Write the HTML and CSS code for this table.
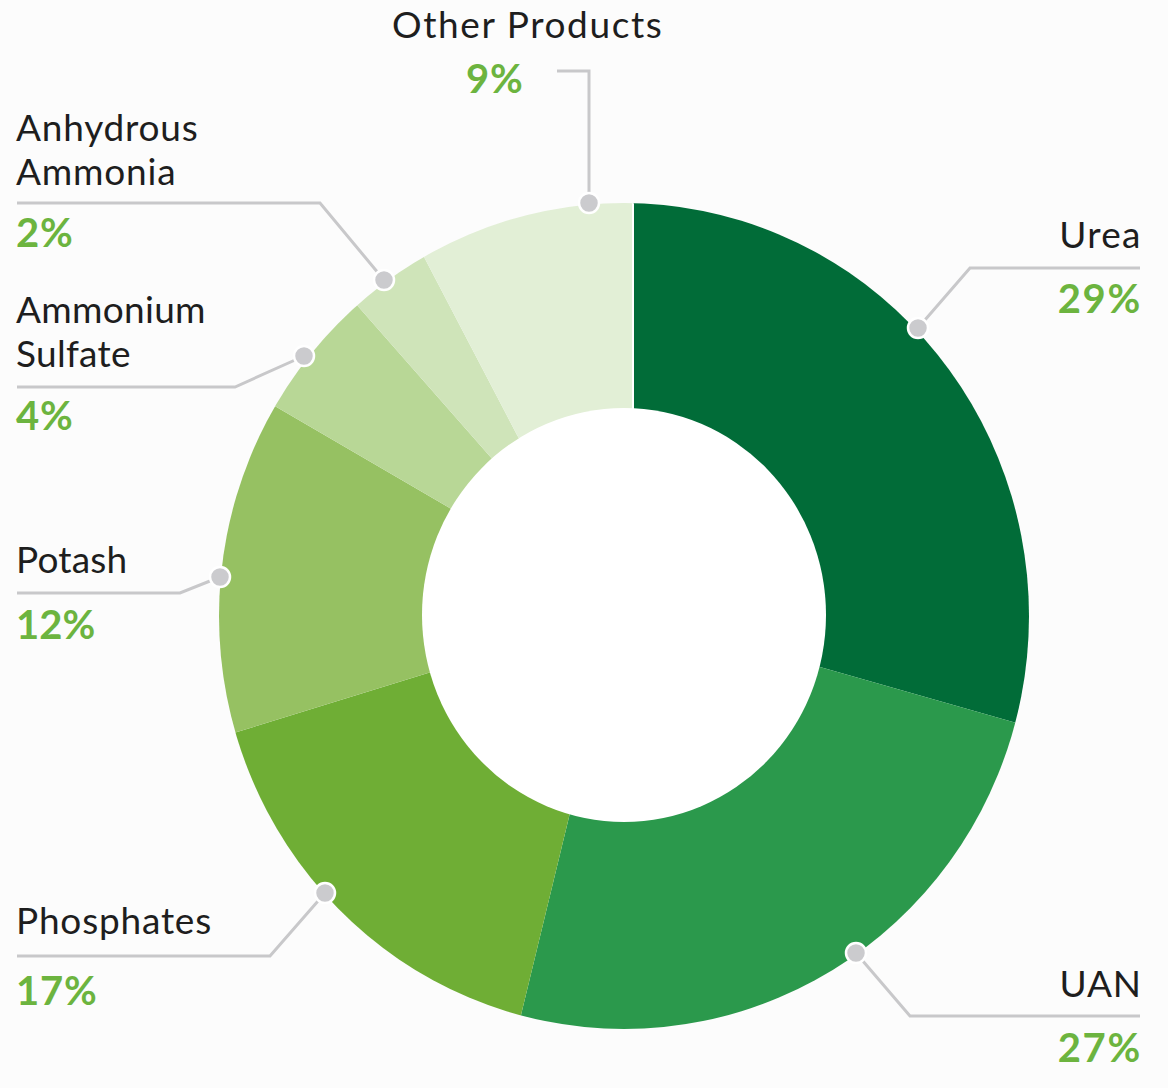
FILE: index.html
```html
<!DOCTYPE html>
<html lang="en">
<head>
<meta charset="utf-8">
<title>Product Mix</title>
<link rel="stylesheet" href="styles.css">
</head>
<body>
<div class="chart">
  <svg class="donut" width="1168" height="1088" viewBox="0 0 1168 1088" xmlns="http://www.w3.org/2000/svg">
    <defs>
      <clipPath id="ring">
        <ellipse cx="624" cy="616" rx="405" ry="413"/>
      </clipPath>
    </defs>
    <g clip-path="url(#ring)">
      <polygon class="seg seg-urea" points="633,407 633,202 633,0 1168,0 1167,766 1013,722 820,667 624,615"/>
      <polygon class="seg seg-uan" points="820,667 1013,722 1167,766 1168,1088 503,1088 521,1015 569,817 624,615"/>
      <polygon class="seg seg-phos" points="569,817 521,1015 503,1088 0,1088 0,805 237,732 428,673 624,615"/>
      <polygon class="seg seg-potash" points="428,673 237,732 0,805 0,246 273,405 448,507 624,615"/>
      <polygon class="seg seg-amsul" points="448,507 273,405 0,246 218,147 356,304 494,461 624,615"/>
      <polygon class="seg seg-anh" points="494,461 356,304 218,147 329,75 423,255 517,435 624,615"/>
      <polygon class="seg seg-other" points="517,435 423,255 329,75 633,0 633,202 633,407 624,615"/>
      <line class="sep" x1="633" y1="190" x2="633" y2="410"/>
    </g>
    <ellipse class="hole" cx="624" cy="615" rx="202" ry="207"/>

    <g class="leaders">
      <polyline points="557,71 589,71 589,203"/>
      <polyline points="918,328 970,268 1140,268"/>
      <polyline points="856,953 910,1016 1140,1016"/>
      <polyline points="325,893 270,956 17,956"/>
      <polyline points="220,577 180,593 17,593"/>
      <polyline points="304,356 235,387 17,387"/>
      <polyline points="384,280 320,203 17,203"/>
    </g>
    <g class="dots">
      <circle cx="589" cy="203" r="10"/>
      <circle cx="918" cy="328" r="10"/>
      <circle cx="856" cy="953" r="10"/>
      <circle cx="325" cy="893" r="10"/>
      <circle cx="220" cy="577" r="10"/>
      <circle cx="304" cy="356" r="10"/>
      <circle cx="384" cy="280" r="10"/>
    </g>
  </svg>

  <div class="label l-other">
    <div class="name">Other Products</div>
    <div class="pct">9%</div>
  </div>
  <div class="label l-anh">
    <div class="name">Anhydrous<br>Ammonia</div>
    <div class="pct">2%</div>
  </div>
  <div class="label l-amsul">
    <div class="name">Ammonium<br>Sulfate</div>
    <div class="pct">4%</div>
  </div>
  <div class="label l-potash">
    <div class="name">Potash</div>
    <div class="pct">12%</div>
  </div>
  <div class="label l-phos">
    <div class="name">Phosphates</div>
    <div class="pct">17%</div>
  </div>
  <div class="label right l-urea">
    <div class="name">Urea</div>
    <div class="pct">29%</div>
  </div>
  <div class="label right l-uan">
    <div class="name">UAN</div>
    <div class="pct">27%</div>
  </div>
</div>
</body>
</html>
```

FILE: styles.css
```css
* { box-sizing: border-box; }

html, body {
  margin: 0;
  padding: 0;
  background: #fcfcfc;
}

body {
  font-family: "Lato", "Liberation Sans", sans-serif;
  color: #1e1e1e;
}

.chart {
  position: relative;
  width: 1168px;
  height: 1088px;
  overflow: hidden;
}

.donut {
  position: absolute;
  left: 0;
  top: 0;
  display: block;
}

.seg-urea   { fill: #016c38; }
.seg-uan    { fill: #2b994c; }
.seg-phos   { fill: #6fae35; }
.seg-potash { fill: #96c162; }
.seg-amsul  { fill: #b8d796; }
.seg-anh    { fill: #cfe4b9; }
.seg-other  { fill: #e2efd6; }

.sep {
  stroke: #ffffff;
  stroke-width: 2;
}

.hole { fill: #ffffff; }

.leaders polyline {
  fill: none;
  stroke: #c8c8ca;
  stroke-width: 3;
  stroke-linejoin: miter;
}

.dots circle {
  fill: #cbcbce;
  stroke: #ffffff;
  stroke-width: 2.5;
}

.label {
  position: absolute;
  white-space: nowrap;
}

.label.right { text-align: right; }

.name {
  font-size: 37px;
  line-height: 44px;
  font-weight: 400;
  letter-spacing: 0.8px;
  color: #1e1e1e;
}

.pct {
  font-size: 40px;
  line-height: 40px;
  font-weight: 700;
  letter-spacing: 0.8px;
  color: #6cb43f;
}

.label.right .name,
.label.right .pct { margin-right: -0.8px; }

.l-other { left: 392px; top: 2px; }
.l-other .name { letter-spacing: 1.6px; }
.l-other .pct { margin-top: 12px; padding-left: 74px; }

.l-anh { left: 16px; top: 105px; }
.l-anh .pct { margin-top: 19px; }

.l-amsul { left: 16px; top: 287px; }
.l-amsul .name { letter-spacing: 0.3px; }
.l-amsul .pct { margin-top: 20px; }

.l-potash { left: 16px; top: 537px; }
.l-potash .name { letter-spacing: 0.2px; }
.l-potash .pct { margin-top: 23px; letter-spacing: 0; }

.l-phos { left: 16px; top: 898px; }
.l-phos .pct { margin-top: 28px; }

.l-urea { right: 27px; top: 212px; }
.l-urea .name { letter-spacing: 1.3px; margin-right: -1.3px; }
.l-urea .pct { margin-top: 22px; letter-spacing: 1.6px; margin-right: -1.6px; }

.l-uan { right: 27px; top: 961px; }
.l-uan .pct { margin-top: 22px; letter-spacing: 1.6px; margin-right: -1.6px; }
```
